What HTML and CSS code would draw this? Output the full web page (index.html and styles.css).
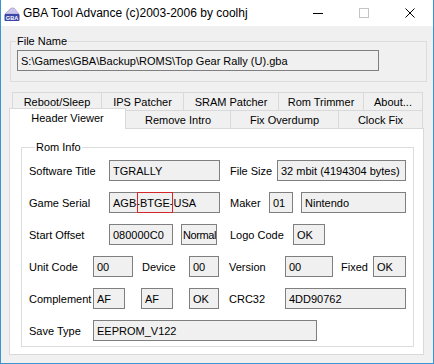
FILE: index.html
```html
<!DOCTYPE html>
<html lang="en">

<head>
    <meta charset="UTF-8">
    <title>GBA Tool Advance</title>
    <link rel="stylesheet" href="styles.css">
</head>

<body>
    <div class="window">
        <div class="titlebar">
            <svg class="app-icon" width="16" height="16" viewBox="0 0 16 16">
                <polygon points="1,8 7,2 10,2 15,8" fill="#cdc6ec" stroke="#9a92c8" stroke-width="0.6" />
                <rect x="0.5" y="8" width="15" height="7" rx="1" fill="#3b46a6" />
                <text x="8" y="14" font-size="5.6" font-weight="bold" font-family="Liberation Sans, sans-serif" fill="#fff" text-anchor="middle">GBA</text>
            </svg>
            <span class="title">GBA Tool Advance (c)2003-2006 by coolhj</span>
            <div class="caption-buttons">
                <span class="cap">
                    <svg width="10" height="10" viewBox="0 0 10 10"><line x1="0" y1="5.5" x2="10" y2="5.5" stroke="#000" /></svg>
                </span>
                <span class="cap">
                    <svg width="10" height="10" viewBox="0 0 10 10"><rect x="0.5" y="0.5" width="9" height="9" fill="none" stroke="#c4c4c4" /></svg>
                </span>
                <span class="cap">
                    <svg width="10" height="10" viewBox="0 0 10 10"><path d="M0.5 0.5 L9.5 9.5 M9.5 0.5 L0.5 9.5" stroke="#000" stroke-width="1" /></svg>
                </span>
            </div>
        </div>

        <div class="client">
            <fieldset class="group file-group">
                <legend>File Name</legend>
                <div class="field file-field">S:\Games\GBA\Backup\ROMS\Top Gear Rally (U).gba</div>
            </fieldset>

            <div class="tabs">
                <div class="tab-row back">
                    <div class="tab t-reboot">Reboot/Sleep</div>
                    <div class="tab t-ips">IPS Patcher</div>
                    <div class="tab t-sram">SRAM Patcher</div>
                    <div class="tab t-trim">Rom Trimmer</div>
                    <div class="tab t-about">About...</div>
                </div>
                <div class="tab-row front">
                    <div class="tab selected t-header">Header Viewer</div>
                    <div class="tab t-intro">Remove Intro</div>
                    <div class="tab t-overdump">Fix Overdump</div>
                    <div class="tab t-clock">Clock Fix</div>
                </div>
            </div>

            <div class="tab-panel">
                <fieldset class="group rom-group">
                    <legend>Rom Info</legend>

                    <div class="row">
                        <span class="lbl w80">Software Title</span>
                        <div class="field w111">TGRALLY</div>
                        <span class="lbl w47 ml10">File Size</span>
                        <div class="field w129">32 mbit (4194304 bytes)</div>
                    </div>

                    <div class="row">
                        <span class="lbl w80">Game Serial</span>
                        <div class="field serial w111">AGB<span class="serial-hl">-BTGE-</span>USA</div>
                        <span class="lbl w39 ml10">Maker</span>
                        <div class="field w24">01</div>
                        <div class="field w105 ml8">Nintendo</div>
                    </div>

                    <div class="row">
                        <span class="lbl w80">Start Offset</span>
                        <div class="field w64">080000C0</div>
                        <div class="field w36 ml8 tight">Normal</div>
                        <span class="lbl w63 ml13">Logo Code</span>
                        <div class="field w32">OK</div>
                    </div>

                    <div class="row">
                        <span class="lbl w64">Unit Code</span>
                        <div class="field w40">00</div>
                        <span class="lbl w47 ml9">Device</span>
                        <div class="field w30">00</div>
                        <span class="lbl w56 ml10">Version</span>
                        <div class="field w48">00</div>
                        <span class="lbl w32 ml8">Fixed</span>
                        <div class="field w33">OK</div>
                    </div>

                    <div class="row">
                        <span class="lbl w64">Complement</span>
                        <div class="field w32">AF</div>
                        <div class="field w32 ml16">AF</div>
                        <div class="field w30 ml16">OK</div>
                        <span class="lbl w56 ml10">CRC32</span>
                        <div class="field w121">4DD90762</div>
                    </div>

                    <div class="row">
                        <span class="lbl w64">Save Type</span>
                        <div class="field w224">EEPROM_V122</div>
                    </div>
                </fieldset>
            </div>
        </div>
    </div>
</body>

</html>
```

FILE: styles.css
```css
* {
    box-sizing: border-box;
}

body {
    margin: 0;
    font-family: 'Liberation Sans', Arial, sans-serif;
    font-size: 11px;
    color: #000;
    background-color: #fff;
}

.window {
    width: 434px;
    height: 364px;
    display: flex;
    flex-direction: column;
    border: 1px solid #3b93d2;
    border-top: none;
    background-color: #f0f0f0;
}

/* title bar */
.titlebar {
    height: 26px;
    display: flex;
    align-items: center;
    background-color: #fff;
    padding-left: 3px;
}

.app-icon {
    display: block;
    margin-top: 1px;
}

.title {
    margin-left: 3px;
    font-size: 12px;
}

.caption-buttons {
    margin-left: auto;
    display: flex;
    height: 100%;
}

.cap {
    width: 46px;
    display: flex;
    align-items: center;
    justify-content: center;
}

.cap svg {
    display: block;
}

/* client area */
.client {
    flex: 1;
}

.group {
    border: 1px solid #dcdcdc;
    padding: 0;
    margin: 0;
    min-width: 0;
}

.group legend {
    padding: 0 1px;
    line-height: 14px;
}

.file-group {
    margin: 8px 0 0 9px;
    width: 417px;
    padding-bottom: 10px;
}

.file-group legend {
    margin-left: 5px;
}

.field {
    height: 21px;
    display: flex;
    align-items: center;
    padding-left: 3px;
    background-color: #f0f0f0;
    border: 1px solid #7f7f7f;
    white-space: nowrap;
    overflow: hidden;
}

.field.tight {
    padding-left: 1px;
    letter-spacing: -0.4px;
}

.field.serial {
    overflow: visible;
}

.file-field {
    width: 362px;
    margin: 2px 0 0 6px;
}

/* tabs */
.tabs {
    margin: 10px 0 0 8px;
}

.tab-row {
    display: flex;
    height: 18px;
    align-items: flex-start;
}

.tab-row.back {
    margin-left: 3px;
}

.tab {
    height: 18px;
    display: flex;
    align-items: center;
    justify-content: center;
    border: 1px solid #d9d9d9;
    border-bottom: none;
    background-color: #f0f0f0;
    margin-left: -1px;
}

.tab:first-child {
    margin-left: 0;
}

.tab.selected {
    position: relative;
    z-index: 1;
    height: 21px;
    margin-top: -2px;
    background-color: #fff;
    padding-bottom: 2px;
}

.t-reboot { width: 90px; }
.t-ips { width: 83px; }
.t-sram { width: 96px; }
.t-trim { width: 86px; }
.t-about { width: 60px; }
.t-header { width: 117px; }
.t-intro { width: 106px; }
.t-overdump { width: 109px; }
.t-clock { width: 85px; }

.tab-panel {
    margin-left: 8px;
    width: 415px;
    background-color: #fff;
    border: 1px solid #d9d9d9;
    padding: 0 0 7px 11px;
}

.rom-group {
    margin-top: 11px;
    width: 393px;
    padding: 0 0 5px 7px;
}

.rom-group legend {
    margin-left: 6px;
}

.row {
    display: flex;
    align-items: center;
    height: 21px;
    margin-top: 11px;
}

.row:first-of-type {
    margin-top: 6px;
}

.lbl {
    white-space: nowrap;
}

/* red marker drawn over the serial's game code */
.serial-hl {
    position: relative;
    align-self: stretch;
    display: flex;
    align-items: center;
}

.serial-hl::after {
    content: "";
    position: absolute;
    top: -1px;
    bottom: -1px;
    left: 1px;
    right: 1px;
    border: 1px solid #d3262a;
}

/* widths */
.w24 { width: 24px; }
.w30 { width: 30px; }
.w32 { width: 32px; }
.w33 { width: 33px; }
.w36 { width: 36px; }
.w39 { width: 39px; }
.w40 { width: 40px; }
.w47 { width: 47px; }
.w48 { width: 48px; }
.w56 { width: 56px; }
.w63 { width: 63px; }
.w64 { width: 64px; }
.w80 { width: 80px; }
.w105 { width: 105px; }
.w111 { width: 111px; }
.w121 { width: 121px; }
.w129 { width: 129px; }
.w224 { width: 224px; }

.ml8 { margin-left: 8px; }
.ml9 { margin-left: 9px; }
.ml10 { margin-left: 10px; }
.ml13 { margin-left: 13px; }
.ml16 { margin-left: 16px; }
```
